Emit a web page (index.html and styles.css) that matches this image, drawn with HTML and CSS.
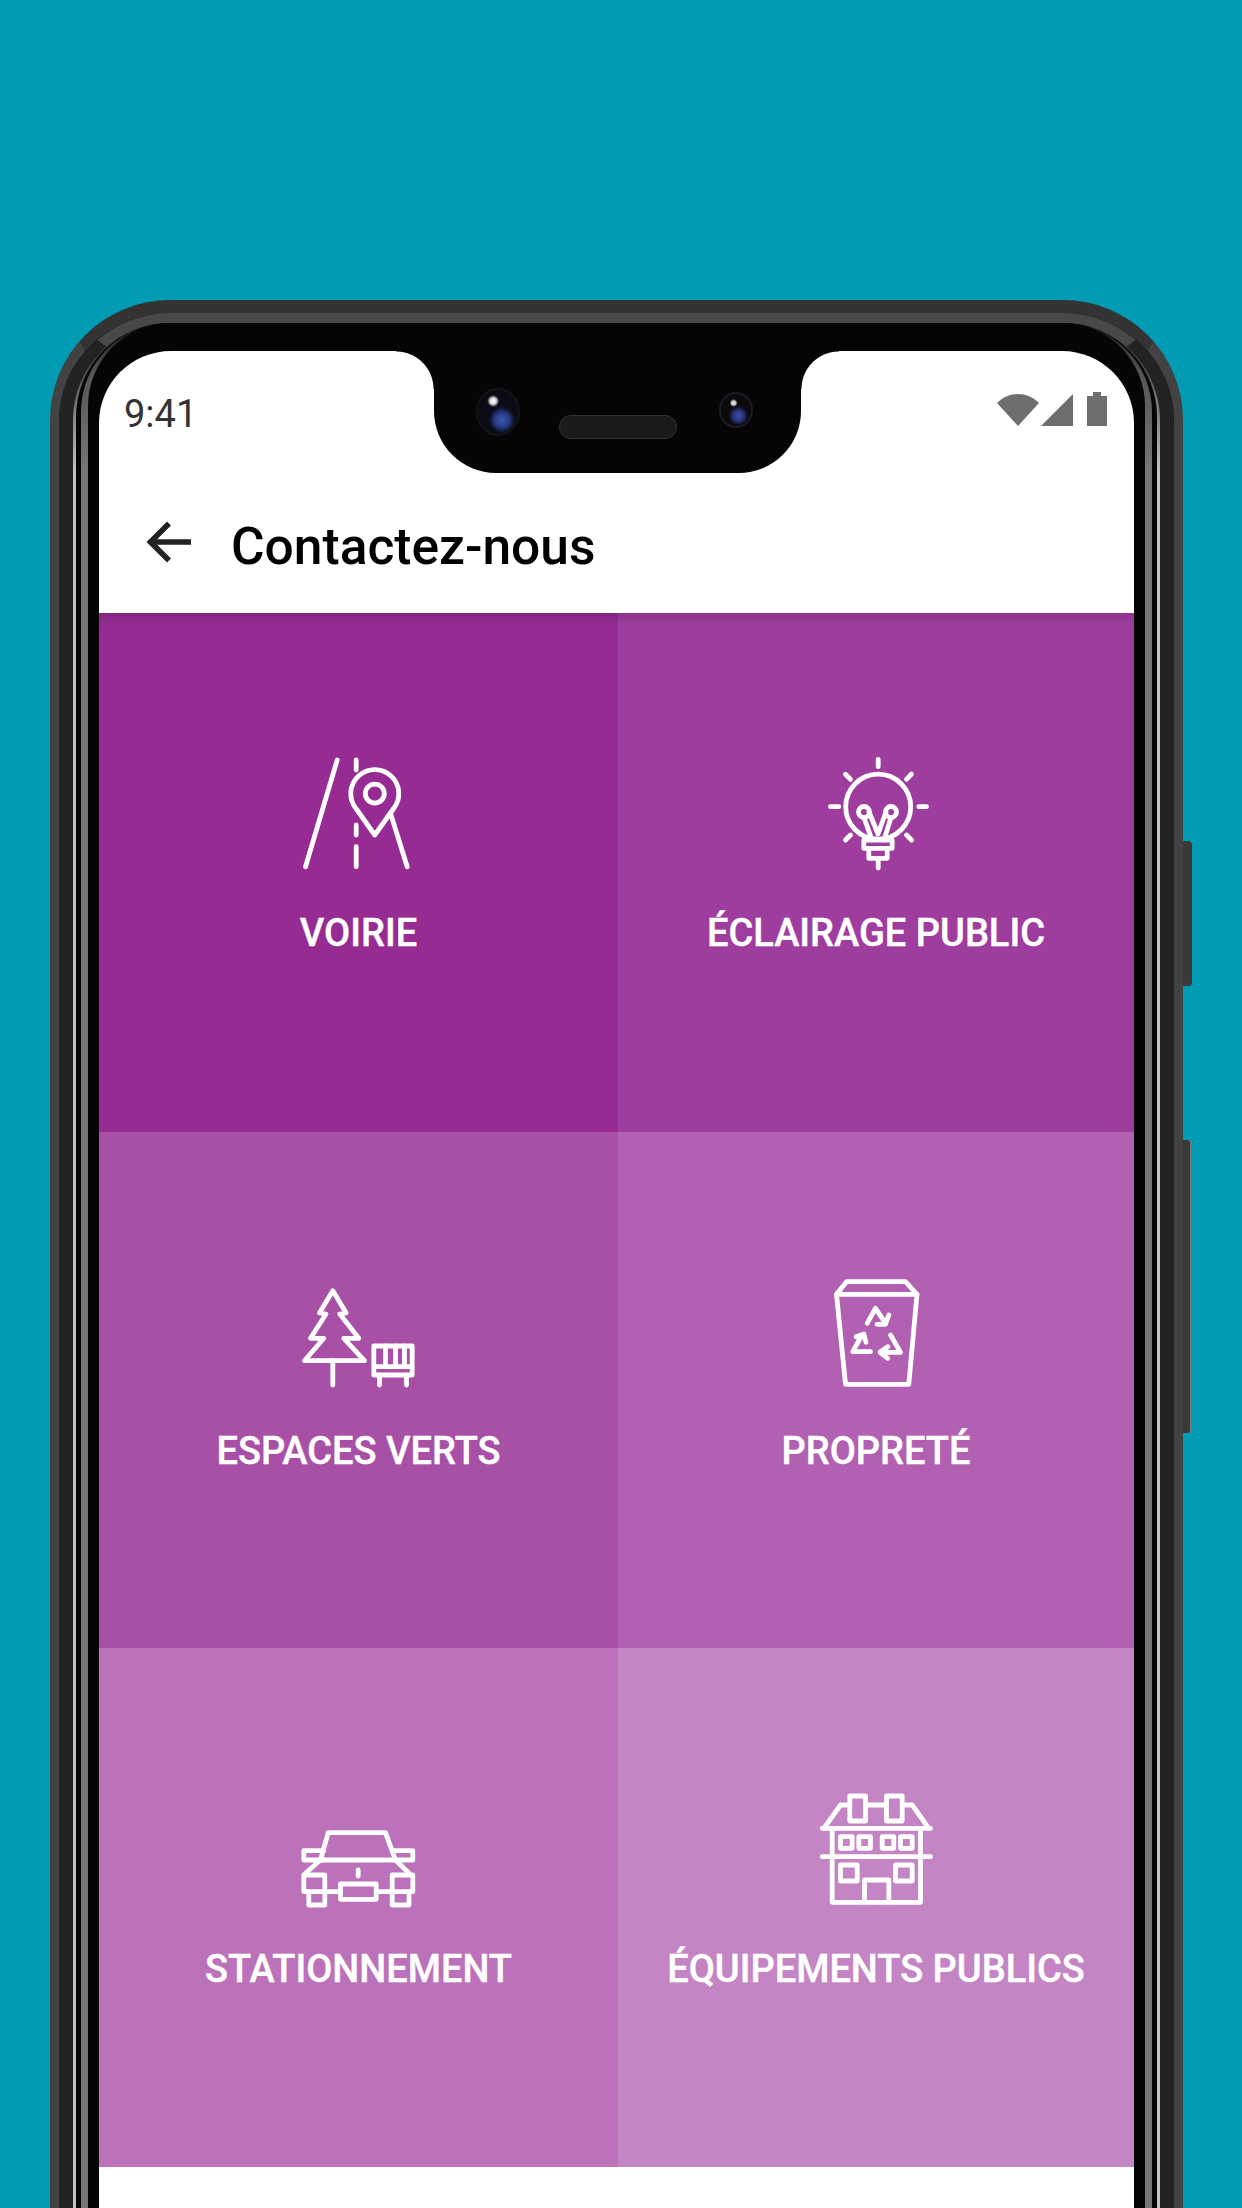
FILE: index.html
```html
<!DOCTYPE html>
<html lang="fr">

<head>
    <meta charset="UTF-8">
    <meta name="viewport" content="width=device-width, initial-scale=1.0">
    <title>Contactez-nous</title>
    <link rel="stylesheet" href="styles.css">
</head>

<body>
    <div class="phone">
        <div class="btn-power"></div>
        <div class="btn-volume"></div>
        <div class="band-mid">
            <div class="band-light">
                <div class="band-black">
                    <div class="band-gray">
                        <div class="band-inner">
                            <div class="screen">
                                <div class="notch">
                                    <div class="cam-big"></div>
                                    <div class="speaker"></div>
                                    <div class="cam-small"></div>
                                </div>

                                <div class="status-bar">
                                    <span class="time">9:41</span>
                                    <svg class="status-icons" width="111" height="34" viewBox="0 0 111 34">
                                        <path d="M0 11 C12 -1 30 -1 42 11 L21 34 Z" />
                                        <path d="M44 34 L76 2 V34 Z" />
                                        <path d="M90 4 H96 V0 H104 V4 H110 V34 H90 Z" />
                                    </svg>
                                </div>

                                <div class="app-bar">
                                    <svg class="back" width="44" height="42" viewBox="0 0 44 42">
                                        <path d="M44 21 H4 M22 2.500 L3.500 21 L22 39.500" />
                                    </svg>
                                    <h1 class="title">Contactez-nous</h1>
                                </div>

                                <div class="grid">
                                    <div class="cell c1">
                                        <svg class="icon" viewBox="0 0 120 120">
                                            <path d="M38.200 6 L6.500 112.700" />
                                            <path d="M57.200 6 V16 M57.200 71 V81 M57.200 92.700 V112.700" />
                                            <path d="M91.500 59.300 L108.200 112.700" />
                                            <path d="M75.800 81 L57 54.500 A24 24 0 1 1 94.600 54.500 Z" />
                                            <circle cx="75.800" cy="39.600" r="9.500" />
                                        </svg>
                                        <div class="label">VOIRIE</div>
                                    </div>
                                    <div class="cell c2">
                                        <svg class="icon" viewBox="0 0 120 120">
                                            <circle cx="62.200" cy="52.700" r="32.500" />
                                            <path d="M62.200 5.300 V12.700 M14.500 52.700 H22.800 M102.800 52.700 H110.500" />
                                            <path d="M29.500 20.300 L34.500 25.300 M95.500 20 L90.500 25.300 M29.500 86 L34.500 81 M95.500 86 L90.500 81" />
                                            <circle cx="48" cy="58" r="5.500" />
                                            <circle cx="75" cy="58" r="5.500" />
                                            <path d="M48 63.500 L56 86 M75 63.500 L68 86 M53 58 L62 80 L70 58" />
                                            <path d="M47.800 86 H76.200 V94.300 H47.800 Z M52.800 94.300 H71.200 V104.300 H52.800 Z M62.200 104.300 V114" />
                                        </svg>
                                        <div class="label">ÉCLAIRAGE PUBLIC</div>
                                    </div>
                                    <div class="cell c3">
                                        <svg class="icon" viewBox="0 0 120 120">
                                            <path d="M33.800 17.700 L47.200 40 L40.800 41 L59.800 65.300 L44.800 65.300 L65.500 87.700 H5.500 L24.800 65.300 L11.500 65.300 L27 41 L20.500 40 Z" />
                                            <path d="M33.800 87.700 V112" />
                                            <path d="M74.800 73 H113.200 V102 H74.800 Z M74.800 93.700 H113.200" />
                                            <path d="M86.500 73 V93.700 M96.500 73 V93.700 M105.500 73 V93.700" />
                                            <path d="M80.500 102 V112 M107.500 102 V112" />
                                        </svg>
                                        <div class="label">ESPACES VERTS</div>
                                    </div>
                                    <div class="cell c4">
                                        <svg class="icon" viewBox="0 0 120 120">
                                            <path d="M30.500 8.700 H89.500 L101 21.300 H20.500 Z" />
                                            <path d="M20.500 21.300 L29.500 111.300 H92.800 L101 21.300" />
                                            <path d="M51.200 50.300 L59.500 35.300 L69.500 50.300 M72.800 42 L69.500 51.300 L61 51.300" />
                                            <path d="M46 62 L36.800 78.700 H54.500 M40.200 63.700 L47.800 61 L50 69.300" />
                                            <path d="M74.500 62 L84.500 79.300 H66.200 M71.800 73.700 L64 79.300 L71.800 85.300" />
                                        </svg>
                                        <div class="label">PROPRETÉ</div>
                                    </div>
                                    <div class="cell c5">
                                        <svg class="icon" viewBox="0 0 120 120">
                                            <path d="M21.500 71 L29.200 43.700 H86.500 L96.500 71 Z" />
                                            <path d="M24.800 61.700 H4.800 V71 H24.800 M94.800 61.700 H113.800 V71 H94.800" />
                                            <path d="M21.500 71 L6.500 84.300 M96.500 71 L110 84.300" />
                                            <path d="M25.800 86 H4.800 V102.700 H25.800 Z M93.200 86 H113.800 V102.700 H93.200 Z" />
                                            <path d="M9.800 102.700 V116 H25.800 V102.700 M93.200 102.700 V116 H110 V102.700" />
                                            <path d="M41.500 95 H77.200 V110.300 H41.500 Z M25.800 102.700 H41.500 M77.200 102.700 H93.200" />
                                            <path d="M59.200 81 V87" />
                                        </svg>
                                        <div class="label">STATIONNEMENT</div>
                                    </div>
                                    <div class="cell c6">
                                        <svg class="icon" viewBox="0 0 120 120">
                                            <path d="M33.800 7 H49.500 V32 H33.800 Z M70.500 7 H86.200 V32 H70.500 Z" />
                                            <path d="M7.800 39.300 L24.500 16 H33.800 M49.500 16 H70.500 M86.200 16 H96.200 L112.800 39.300" />
                                            <path d="M6.200 39.300 H114.500 M6.200 67.700 H114.500" />
                                            <path d="M16.200 39.300 V113.300 H104.500 V39.300" />
                                            <path d="M24.500 47.700 H36.200 V59.300 H24.500 Z M42.800 47.700 H54.500 V59.300 H42.800 Z M66.200 47.700 H77.800 V59.300 H66.200 Z M84.500 47.700 H96.200 V59.300 H84.500 Z" />
                                            <path d="M24.500 76 H41.200 V92 H24.500 Z M79.500 76 H96.200 V92 H79.500 Z" />
                                            <path d="M48.500 113.300 V91 H72.800 V113.300" />
                                        </svg>
                                        <div class="label">ÉQUIPEMENTS PUBLICS</div>
                                    </div>
                                </div>
                            </div>
                        </div>
                    </div>
                </div>
            </div>
        </div>
    </div>
</body>

</html>
```

FILE: styles.css
```css
* {
    padding: 0;
    margin: 0;
    box-sizing: border-box;
}

html,
body {
    width: 1242px;
    height: 2208px;
    overflow: hidden;
}

body {
    background-color: #019cb4;
    padding: 300px 59px 0 50px;
    font-family: Roboto, "Liberation Sans", sans-serif;
}

/* phone body, one nested ring per band of the bezel */
.phone {
    position: relative;
    width: 1133px;
    border: 9px solid #424242;
    border-top: 13px solid #333;
    border-radius: 120px 120px 0 0;
    background-color: #222;
}

.band-mid {
    border: 14px solid #222;
    border-top: 10px solid #484848;
    border-bottom: 0;
    border-radius: 111px 111px 0 0;
}

/* the two highlights fade out towards the top corners */
.band-light {
    padding: 0 3px;
    border-radius: 97px 97px 0 0;
    background: linear-gradient(#2c2c2c 0, #555 50px, #c4c4c4 150px);
}

.band-black {
    padding: 0 5px;
    border-radius: 94px 94px 0 0;
    background-color: #050505;
}

.band-gray {
    padding: 0 7px;
    border-radius: 89px 89px 0 0;
    background: linear-gradient(#151515 0, #555 50px, #777 150px);
}

.band-inner {
    padding: 28px 11px 0;
    border-radius: 83px 83px 0 0;
    background-color: #050505;
}

.btn-power,
.btn-volume {
    position: absolute;
    left: 1124px;
    width: 9px;
    background-color: #3a3838;
    border-radius: 0 4px 4px 0;
}

.btn-power {
    top: 528px;
    height: 145px;
}

.btn-volume {
    top: 827px;
    height: 293px;
    border-right: 2px solid #777;
}

.screen {
    position: relative;
    height: 1950px;
    background-color: #fff;
    border-radius: 72px 72px 0 0;
    overflow: hidden;
}

/* notch */
.notch {
    position: absolute;
    left: 335px;
    top: 0;
    width: 367px;
    height: 122px;
    background-color: #050505;
    border-radius: 0 0 62px 62px;
    display: flex;
    align-items: center;
    padding-left: 42px;
}

.notch::before,
.notch::after {
    content: "";
    position: absolute;
    top: 0;
    width: 38px;
    height: 38px;
}

.notch::before {
    left: -38px;
    background: radial-gradient(circle at 0 100%, transparent 37px, #050505 38px);
}

.notch::after {
    right: -38px;
    background: radial-gradient(circle at 100% 100%, transparent 37px, #050505 38px);
}

.cam-big {
    width: 44px;
    height: 48px;
    border-radius: 50%;
    background:
        radial-gradient(circle at 38% 25%, #fff 0, #ddd 3px, transparent 6px),
        radial-gradient(circle at 60% 68%, #3c55b0 0, #2a3c88 7px, #0a0c18 13px, #0a0a0d 100%);
    border: 2px solid #141418;
}

.speaker {
    width: 118px;
    height: 24px;
    margin: 30px 0 0 39px;
    background-color: #1a1a1b;
    border: 1px solid #333335;
    border-radius: 12px;
}

.cam-small {
    width: 34px;
    height: 36px;
    margin-left: 42px;
    margin-bottom: 4px;
    border-radius: 50%;
    background:
        radial-gradient(circle at 42% 28%, #eee 0, #ccc 2px, transparent 4px),
        radial-gradient(circle at 58% 68%, #3c4fa8 0, #27367e 5px, #08080d 10px);
    border: 2px solid #1c1c22;
}

/* status bar */
.status-bar {
    height: 110px;
    padding: 41px 26px 0 25px;
    display: flex;
    justify-content: space-between;
    align-items: flex-start;
}

.time {
    font-size: 38px;
    line-height: 44px;
    color: #333;
}

.status-icons {
    fill: #6f6d70;
}

/* app bar */
.app-bar {
    height: 152px;
    padding: 60px 0 0 48px;
    display: flex;
    align-items: flex-start;
    gap: 40px;
}

.back {
    fill: none;
    stroke: #222;
    stroke-width: 5.500;
}

.title {
    margin-top: -4px;
    font-size: 51.500px;
    line-height: 60px;
    font-weight: 500;
    color: #000;
}

/* categories */
.grid {
    position: relative;
    display: grid;
    grid-template-columns: 519px 516px;
    grid-template-rows: 519px 516px 519px;
}

.grid::before {
    content: "";
    position: absolute;
    left: 0;
    right: 0;
    top: 0;
    height: 12px;
    background: linear-gradient(rgba(0, 0, 0, .12), rgba(0, 0, 0, 0));
}

.cell {
    padding-top: 141px;
    text-align: center;
}

.c1 {
    background-color: #952b93;
}

.c2 {
    background-color: #9f3d9e;
}

.c3 {
    background-color: #a750a6;
}

.c4 {
    background-color: #b160b2;
}

.c5 {
    background-color: #bb72ba;
}

.c6 {
    background-color: #c485c4;
}

.icon {
    display: block;
    width: 120px;
    height: 120px;
    margin: 0 auto;
    fill: none;
    stroke: #fff;
    stroke-width: 4.800;
    stroke-linecap: round;
    stroke-linejoin: round;
}

.label {
    margin-top: 36px;
    font-size: 38px;
    line-height: 46px;
    font-weight: 500;
    color: #fff;
    -webkit-text-stroke: .4px #fff;
}

.c3 .label,
.c4 .label {
    margin-top: 35px;
}

.c5 .label,
.c6 .label {
    margin-top: 37px;
}
```
